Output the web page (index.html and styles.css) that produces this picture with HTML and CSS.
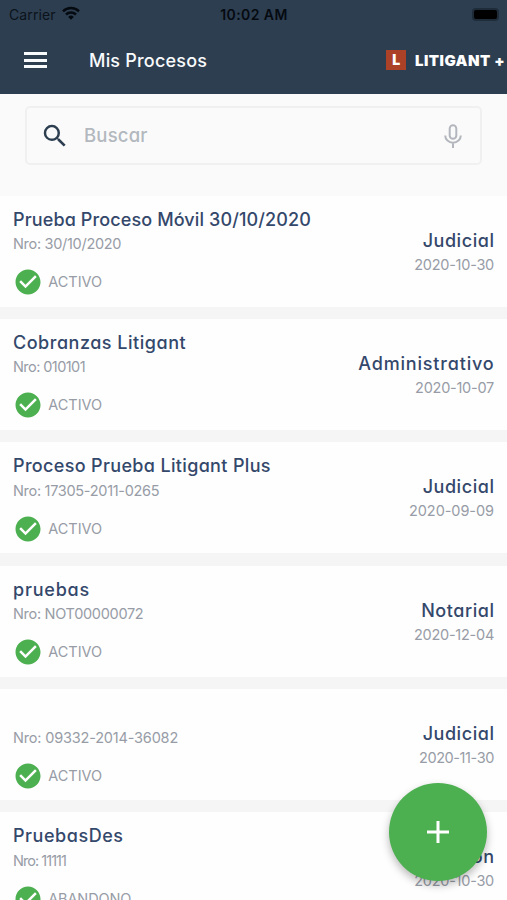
FILE: index.html
```html
<!DOCTYPE html>
<html lang="es">
<head>
<meta charset="utf-8">
<meta name="viewport" content="width=device-width">
<title>Mis Procesos</title>
<link rel="stylesheet" href="styles.css">
</head>
<body>
<svg class="defs" width="0" height="0"><symbol id="check" viewBox="0 0 24 24"><path fill="currentColor" d="M12 2C6.48 2 2 6.48 2 12s4.480 10 10 10 10-4.480 10-10S17.520 2 12 2zm-2 15l-5-5 1.410-1.410L10 14.170l7.590-7.590L19 8l-9 9z"/></symbol></svg>
<header class="top">
  <div class="status">
    <div class="carrier"><span>Carrier</span>
      <svg width="18" height="14" viewBox="0 0 18 14"><g fill="none" stroke="#050a10" stroke-width="2.500"><path d="M1 5.300a11.500 11.500 0 0 1 16 0"/><path d="M4 8.500a7.200 7.200 0 0 1 10 0"/></g><path fill="#050a10" d="M9 13.700L6.200 10.900a4 4 0 0 1 5.600 0z"/></svg>
    </div>
    <div class="time">10:02 AM</div>
    <div class="battery"><i></i></div>
  </div>
  <nav class="bar">
    <div class="menu"><i></i><i></i><i></i></div>
    <h1>Mis Procesos</h1>
    <div class="brand"><b>L</b><span>LITIGANT +</span></div>
  </nav>
</header>
<section class="search">
  <div class="field">
    <svg class="lens" width="30" height="30" viewBox="0 0 24 24"><path fill="#2c3e50" d="M15.500 14h-.790l-.280-.270A6.471 6.471 0 0 0 16 9.500 6.500 6.500 0 1 0 9.500 16c1.610 0 3.090-.590 4.230-1.570l.270.280v.790l5 4.990L20.490 19l-4.990-5zm-6 0C7.010 14 5 11.990 5 9.500S7.010 5 9.500 5 14 7.010 14 9.500 11.990 14 9.500 14z"/></svg>
    <span>Buscar</span>
    <svg class="mic" width="18" height="24" viewBox="0 0 18 24"><g fill="none" stroke="#b3b7bd" stroke-width="2"><rect x="5.700" y="1.200" width="6.600" height="13.600" rx="3.300"/><path d="M1.200 11.500a7.800 7.200 0 0 0 15.600 0M9 18.700V24"/></g></svg>
  </div>
</section>
<main class="list">
  <article class="card">
    <div class="info"><h2>Prueba Proceso Móvil 30/10/2020</h2><p>Nro: 30/10/2020</p><div class="state"><svg><use href="#check"/></svg><span>ACTIVO</span></div></div>
    <div class="kind"><h3>Judicial</h3><time>2020-10-30</time></div>
  </article>
  <article class="card">
    <div class="info"><h2>Cobranzas Litigant</h2><p>Nro: 010101</p><div class="state"><svg><use href="#check"/></svg><span>ACTIVO</span></div></div>
    <div class="kind"><h3>Administrativo</h3><time>2020-10-07</time></div>
  </article>
  <article class="card">
    <div class="info"><h2>Proceso Prueba Litigant Plus</h2><p>Nro: 17305-2011-0265</p><div class="state"><svg><use href="#check"/></svg><span>ACTIVO</span></div></div>
    <div class="kind"><h3>Judicial</h3><time>2020-09-09</time></div>
  </article>
  <article class="card">
    <div class="info"><h2>pruebas</h2><p>Nro: NOT00000072</p><div class="state"><svg><use href="#check"/></svg><span>ACTIVO</span></div></div>
    <div class="kind"><h3>Notarial</h3><time>2020-12-04</time></div>
  </article>
  <article class="card">
    <div class="info"><h2></h2><p>Nro: 09332-2014-36082</p><div class="state"><svg><use href="#check"/></svg><span>ACTIVO</span></div></div>
    <div class="kind"><h3>Judicial</h3><time>2020-11-30</time></div>
  </article>
  <article class="card">
    <div class="info"><h2>PruebasDes</h2><p>Nro: 11111</p><div class="state"><svg><use href="#check"/></svg><span>ABANDONO</span></div></div>
    <div class="kind"><h3>Mediación</h3><time>2020-10-30</time></div>
  </article>
</main>
<div class="fab"><svg width="22" height="22" viewBox="0 0 22 22"><path d="M11 0v22M0 11h22" stroke="#fff" stroke-width="3"/></svg></div>
</body>
</html>
```
FILE: styles.css
```css
* { box-sizing: border-box; margin: 0; padding: 0; }
body {
  position: relative;
  height: 900px;
  overflow: hidden;
  background: #f5f5f6;
  font-family: Inter, "Open Sans", sans-serif;
  font-feature-settings: "cv11";
  white-space: nowrap;
}
.defs { position: absolute; }

.top { height: 94px; background: #2d3e50; }
.status {
  height: 28px;
  padding: 0 8px 0 9px;
  display: grid;
  grid-template-columns: 1fr auto 1fr;
  align-items: center;
  color: #050a10;
  font-size: 14px;
  font-feature-settings: normal;
}
.carrier { display: flex; align-items: center; gap: 6px; }
.carrier span { letter-spacing: .1px; color: #0b131b; }
.carrier svg { margin-top: -2px; }
.time { font-weight: 600; letter-spacing: .42px; }
.battery {
  justify-self: end;
  width: 27px;
  height: 13px;
  padding: 2px;
  border-radius: 4px;
  background: #1e2c3a;
}
.battery i { display: block; height: 9px; border-radius: 2px; background: #000; }
.bar { height: 64px; padding: 0 2px 0 24px; display: flex; align-items: center; }
.menu { width: 23px; display: grid; gap: 3.5px; }
.menu i { height: 3px; background: #f8fafc; }
.bar h1 {
  margin-left: 42px;
  color: #f8fafc;
  font-size: 18px;
  font-weight: 500;
  letter-spacing: .2px;
}
.brand { margin-left: auto; display: flex; align-items: center; gap: 9px; color: #fff; }
.brand b {
  width: 20px;
  height: 20px;
  background: #ab4228;
  font-size: 14px;
  font-weight: 900;
  line-height: 20px;
  text-align: center;
}
.brand span { font-size: 15px; font-weight: 900; letter-spacing: .45px; }

.search { height: 101.5px; padding: 12px 25px 0; background: #fafafa; }
.field {
  height: 59px;
  padding: 0 18px 0 13px;
  display: flex;
  align-items: center;
  border: 2px solid #f0f0f1;
  border-radius: 5px;
}
.field span {
  margin: -2px 0 0 14px;
  color: #b2b8be;
  font-size: 18.5px;
  font-weight: 500;
  letter-spacing: .2px;
}
.mic { margin-left: auto; }

.list { display: grid; gap: 12.4px; }
.card {
  height: 111px;
  padding: 12px 13px 0;
  display: flex;
  justify-content: space-between;
  background: #fefefe;
}
h2, h3 {
  height: 24px;
  color: #34486b;
  font-size: 18px;
  font-weight: 500;
  line-height: 24px;
  letter-spacing: .55px;
}
p, time, .state { color: #979ca6; font-size: 14.5px; line-height: 24px; }
p { height: 24px; margin-top: .5px; letter-spacing: -.3px; }
.state { height: 26px; margin: 13px 0 0 2px; display: flex; align-items: center; }
.state svg { width: 30px; height: 30px; margin: 0 5.500px 0 -2.300px; color: #4caf50; }
.kind { padding-top: 21px; text-align: right; }
.kind h3 { margin-right: -.5px; }
time { display: block; letter-spacing: -.25px; }

.card:nth-child(1) h2 { letter-spacing: .12px; }
.card:nth-child(2) h2 { letter-spacing: .52px; }
.card:nth-child(2) h3 { letter-spacing: .82px; }
.card:nth-child(2) p { letter-spacing: -.57px; }
.card:nth-child(3) h2 { letter-spacing: .34px; }
.card:nth-child(3) time { letter-spacing: -.06px; }
.card:nth-child(4) h2 { letter-spacing: .8px; }
.card:nth-child(5) p { letter-spacing: -.18px; }
.card:nth-child(5) time { letter-spacing: -.4px; }
.card:nth-child(6) p { letter-spacing: -.96px; }
.card:nth-child(6) h3 { letter-spacing: .5px; }
.card:nth-child(6) .state span { letter-spacing: -.12px; }

.fab {
  position: absolute;
  left: 389px;
  top: 782.5px;
  width: 98px;
  height: 98px;
  display: grid;
  place-items: center;
  border-radius: 50%;
  background: #4caf50;
  box-shadow: 0 4px 8px rgba(0, 0, 0, .28);
}
```
